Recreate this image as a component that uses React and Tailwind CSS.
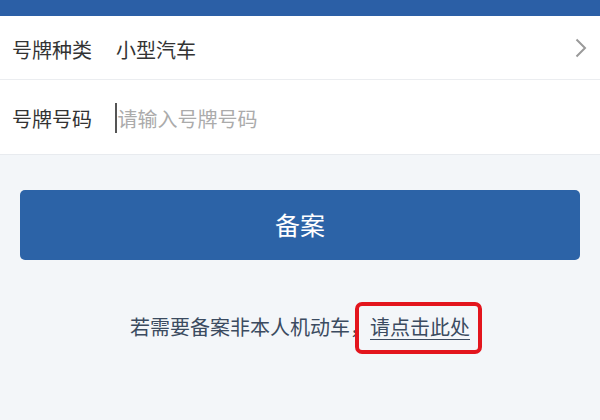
import React from 'react';

const App = () => {
  return (
    <div className="w-[600px] h-[420px] overflow-hidden bg-[#f3f6f9] flex flex-col" style={{ fontFamily: '"Noto Sans CJK SC", "Noto Sans", sans-serif' }}>
      {/* Top header strip */}
      <div className="h-[16px] bg-[#2b5fa6] shrink-0"></div>

      {/* Form rows */}
      <div className="bg-white">
        <div className="h-[64px] flex items-center pl-[12px] pr-[13px] border-b border-[#ebedf0]">
          <span className="w-[104px] pt-[4px] text-[20px] text-[#333333] leading-none">号牌种类</span>
          <span className="flex-1 pt-[4px] text-[20px] text-[#333333] leading-none">小型汽车</span>
          <svg width="12" height="20" viewBox="0 0 12 20">
            <path d="M1.5 1.5 L10 10 L1.5 18.5" fill="none" stroke="#9a9a9a" strokeWidth="2" />
          </svg>
        </div>
        <div className="h-[75px] flex items-center pl-[12px] border-b border-[#e8ebef]">
          <span className="w-[103px] pt-[4px] text-[20px] text-[#333333] leading-none">号牌号码</span>
          <span className="w-[1.5px] h-[30px] bg-[#555555] mr-[1px] mt-[2px]"></span>
          <span className="pt-[4px] text-[20px] text-[#ababab] leading-none">请输入号牌号码</span>
        </div>
      </div>

      {/* Submit button */}
      <div className="px-[20px] pt-[35px]">
        <button className="w-full h-[70px] rounded-[5px] bg-[#2c63a7] text-white text-[25px] flex items-center justify-center">
          备案
        </button>
      </div>

      {/* Footer link */}
      <div className="flex justify-center items-center mt-[52px] text-[20px] text-[#3b4b60]">
        <span>若需要备案非本人机动车，</span>
        <span className="relative underline underline-offset-4 decoration-1">
          请点击此处
          <span className="absolute left-[-15px] right-[-12px] top-[-10px] bottom-[-12px] border-[4px] border-[#e3151d] rounded-[7px]"></span>
        </span>
      </div>
    </div>
  );
};

export default App;
